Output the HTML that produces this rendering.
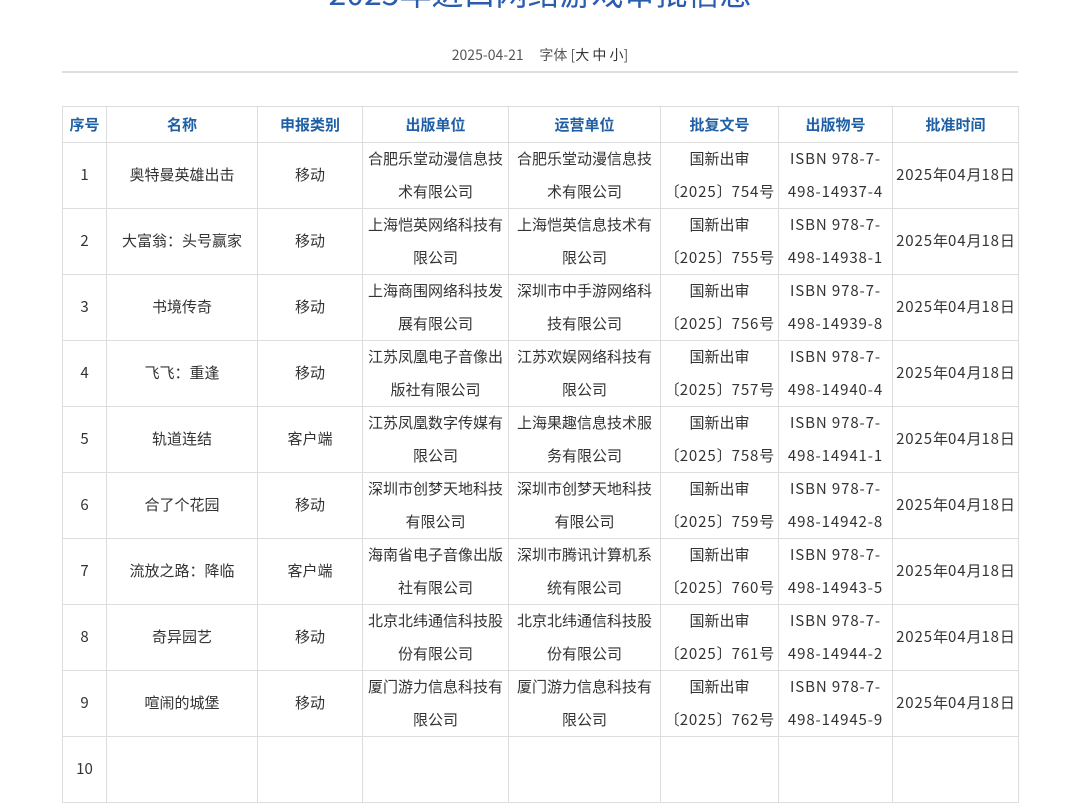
<!DOCTYPE html>
<html><head><meta charset="utf-8"><style>
body{margin:0;background:#fff;width:1080px;height:742px;overflow:hidden;font-family:"Noto Sans CJK SC","Liberation Sans",sans-serif;color:#333;position:relative}
.t{position:absolute;top:-28px;left:0;width:1080px;text-align:center;font-size:32px;color:#2a5db0;line-height:40px;white-space:nowrap}
.d{position:absolute;top:45px;left:0;width:1080px;text-align:center;font-size:14px;color:#555;line-height:20px}
.d span{color:#333}
.hr{position:absolute;top:71px;left:62px;width:956px;height:2px;background:#ddd}
table{position:absolute;top:106px;left:62px;border-collapse:collapse;table-layout:fixed;width:956px}
td,th{border:1px solid #ddd;text-align:center;font-size:15px;line-height:33px;padding:0 3px;overflow:hidden;box-sizing:border-box}
th{color:#1f5fa6;font-weight:bold;height:36px;line-height:34px}
td{height:65.6px;line-height:32.5px}
.n{letter-spacing:0.9px}
</style></head><body>
<div class="t">2025年进口网络游戏审批信息</div>
<div class="d">2025-04-21 &nbsp;&nbsp;&nbsp; 字体 [<span>大 中 小</span>]</div>
<div class="hr"></div>
<table>
<colgroup><col style="width:44px"><col style="width:151px"><col style="width:105px"><col style="width:146px"><col style="width:152px"><col style="width:118px"><col style="width:114px"><col style="width:126px"></colgroup>
<tr><th>序号</th><th>名称</th><th>申报类别</th><th>出版单位</th><th>运营单位</th><th>批复文号</th><th>出版物号</th><th>批准时间</th></tr>
<tr><td>1</td><td>奥特曼英雄出击</td><td>移动</td><td>合肥乐堂动漫信息技<br>术有限公司</td><td>合肥乐堂动漫信息技<br>术有限公司</td><td>国新出审<br>〔<span class="n">2025</span>〕<span class="n">754</span>号</td><td class="n">ISBN 978-7-<br>498-14937-4</td><td><span class="n">2025</span>年<span class="n">04</span>月<span class="n">18</span>日</td></tr>
<tr><td>2</td><td>大富翁：头号赢家</td><td>移动</td><td>上海恺英网络科技有<br>限公司</td><td>上海恺英信息技术有<br>限公司</td><td>国新出审<br>〔<span class="n">2025</span>〕<span class="n">755</span>号</td><td class="n">ISBN 978-7-<br>498-14938-1</td><td><span class="n">2025</span>年<span class="n">04</span>月<span class="n">18</span>日</td></tr>
<tr><td>3</td><td>书境传奇</td><td>移动</td><td>上海商围网络科技发<br>展有限公司</td><td>深圳市中手游网络科<br>技有限公司</td><td>国新出审<br>〔<span class="n">2025</span>〕<span class="n">756</span>号</td><td class="n">ISBN 978-7-<br>498-14939-8</td><td><span class="n">2025</span>年<span class="n">04</span>月<span class="n">18</span>日</td></tr>
<tr><td>4</td><td>飞飞：重逢</td><td>移动</td><td>江苏凤凰电子音像出<br>版社有限公司</td><td>江苏欢娱网络科技有<br>限公司</td><td>国新出审<br>〔<span class="n">2025</span>〕<span class="n">757</span>号</td><td class="n">ISBN 978-7-<br>498-14940-4</td><td><span class="n">2025</span>年<span class="n">04</span>月<span class="n">18</span>日</td></tr>
<tr><td>5</td><td>轨道连结</td><td>客户端</td><td>江苏凤凰数字传媒有<br>限公司</td><td>上海果趣信息技术服<br>务有限公司</td><td>国新出审<br>〔<span class="n">2025</span>〕<span class="n">758</span>号</td><td class="n">ISBN 978-7-<br>498-14941-1</td><td><span class="n">2025</span>年<span class="n">04</span>月<span class="n">18</span>日</td></tr>
<tr><td>6</td><td>合了个花园</td><td>移动</td><td>深圳市创梦天地科技<br>有限公司</td><td>深圳市创梦天地科技<br>有限公司</td><td>国新出审<br>〔<span class="n">2025</span>〕<span class="n">759</span>号</td><td class="n">ISBN 978-7-<br>498-14942-8</td><td><span class="n">2025</span>年<span class="n">04</span>月<span class="n">18</span>日</td></tr>
<tr><td>7</td><td>流放之路：降临</td><td>客户端</td><td>海南省电子音像出版<br>社有限公司</td><td>深圳市腾讯计算机系<br>统有限公司</td><td>国新出审<br>〔<span class="n">2025</span>〕<span class="n">760</span>号</td><td class="n">ISBN 978-7-<br>498-14943-5</td><td><span class="n">2025</span>年<span class="n">04</span>月<span class="n">18</span>日</td></tr>
<tr><td>8</td><td>奇异园艺</td><td>移动</td><td>北京北纬通信科技股<br>份有限公司</td><td>北京北纬通信科技股<br>份有限公司</td><td>国新出审<br>〔<span class="n">2025</span>〕<span class="n">761</span>号</td><td class="n">ISBN 978-7-<br>498-14944-2</td><td><span class="n">2025</span>年<span class="n">04</span>月<span class="n">18</span>日</td></tr>
<tr><td>9</td><td>喧闹的城堡</td><td>移动</td><td>厦门游力信息科技有<br>限公司</td><td>厦门游力信息科技有<br>限公司</td><td>国新出审<br>〔<span class="n">2025</span>〕<span class="n">762</span>号</td><td class="n">ISBN 978-7-<br>498-14945-9</td><td><span class="n">2025</span>年<span class="n">04</span>月<span class="n">18</span>日</td></tr>
<tr><td>10</td><td></td><td></td><td></td><td></td><td></td><td></td><td></td></tr>
</table>
</body></html>
